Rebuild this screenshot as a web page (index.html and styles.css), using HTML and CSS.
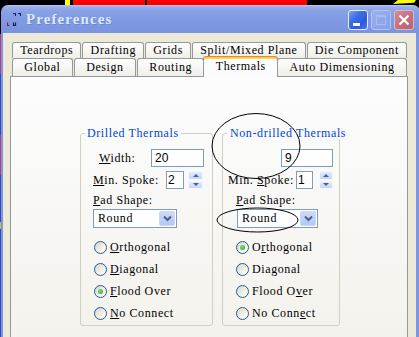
FILE: index.html
```html
<!DOCTYPE html>
<html>
<head>
<meta charset="utf-8">
<link rel="stylesheet" href="styles.css">
</head>
<body>
<div class="desktop">
  <span class="seg seg-y1"></span><span class="seg seg-r1"></span><span class="seg seg-r2"></span><span class="seg seg-y2"></span>
</div>
<div class="window">
  <div class="titlebar">
    <svg class="appicon" width="14" height="14" viewBox="0 0 14 14">
      <path d="M6 1.5H8.5V4" fill="none" stroke="#1e1e5c" stroke-width="1.2"/>
      <path d="M11 1.5H13.5V4" fill="none" stroke="#1e1e5c" stroke-width="1.2"/>
      <path d="M0.5 10.5V13.5H2.5" fill="none" stroke="#8c1c3c" stroke-width="1.2"/>
      <path d="M6.5 10.5V13.5H8.5V10.5" fill="none" stroke="#1e1e5c" stroke-width="1.2"/>
    </svg>
    <span class="title">Preferences</span>
    <div class="tbtns">
      <span class="tbtn min"><i></i></span>
      <span class="tbtn max"><i></i></span>
      <span class="tbtn close"><svg width="12" height="12" viewBox="0 0 12 12"><path d="M1.5 1.5L10.5 10.5M10.5 1.5L1.5 10.5" stroke="#fff" stroke-width="2.2"/></svg></span>
    </div>
  </div>
  <div class="client">
    <div class="tabs">
      <div class="tabrow back">
        <span class="tab">Teardrops</span>
        <span class="tab">Drafting</span>
        <span class="tab">Grids</span>
        <span class="tab">Split/Mixed Plane</span>
        <span class="tab">Die Component</span>
      </div>
      <div class="tabrow front">
        <span class="tab">Global</span>
        <span class="tab">Design</span>
        <span class="tab">Routing</span>
        <span class="tab sel">Thermals</span>
        <span class="tab">Auto Dimensioning</span>
      </div>
    </div>
    <div class="panel">
      <fieldset class="group drilled">
        <legend>Drilled Thermals</legend>
        <div class="row r1"><span><u>W</u>idth:</span><span class="field wide">20</span></div>
        <div class="row r2"><span><u>M</u>in. Spoke:</span><span class="field num">2</span><span class="spin"><i class="up"></i><i class="dn"></i></span></div>
        <div class="row r3"><span><u>P</u>ad Shape:</span></div>
        <div class="row r4"><div class="select"><span class="val">Round</span><span class="dd"><svg width="9" height="7" viewBox="0 0 9 7"><path d="M1 1.5L4.5 5L8 1.5" fill="none" stroke="#4d6185" stroke-width="2"/></svg></span></div></div>
        <div class="radios">
          <div class="rrow"><span class="radio"></span><span><u>O</u>rthogonal</span></div>
          <div class="rrow"><span class="radio"></span><span><u>D</u>iagonal</span></div>
          <div class="rrow"><span class="radio on"></span><span><u>F</u>lood Over</span></div>
          <div class="rrow"><span class="radio"></span><span><u>N</u>o Connect</span></div>
        </div>
      </fieldset>
      <fieldset class="group nondrilled">
        <legend>Non-drilled Thermals</legend>
        <div class="row r1"><span class="field wide">9</span></div>
        <div class="row r2"><span>Min. <u>S</u>poke:</span><span class="field num">1</span><span class="spin"><i class="up"></i><i class="dn"></i></span></div>
        <div class="row r3"><span><u>P</u>ad Shape:</span></div>
        <div class="row r4"><div class="select"><span class="val">Round</span><span class="dd"><svg width="9" height="7" viewBox="0 0 9 7"><path d="M1 1.5L4.5 5L8 1.5" fill="none" stroke="#4d6185" stroke-width="2"/></svg></span></div></div>
        <div class="radios">
          <div class="rrow"><span class="radio on"></span><span>O<u>r</u>thogonal</span></div>
          <div class="rrow"><span class="radio"></span><span>Diagonal</span></div>
          <div class="rrow"><span class="radio"></span><span>Flood O<u>v</u>er</span></div>
          <div class="rrow"><span class="radio"></span><span>No Conn<u>e</u>ct</span></div>
        </div>
      </fieldset>
    </div>
  </div>
</div>
<svg class="marks" width="419" height="337" viewBox="0 0 419 337">
  <ellipse cx="256" cy="146" rx="44" ry="32.5" fill="none" stroke="#000" stroke-width="1"/>
  <ellipse cx="257.5" cy="220" rx="40.5" ry="12" fill="none" stroke="#000" stroke-width="1"/>
</svg>
</body>
</html>
```

FILE: styles.css
```css
* { box-sizing: border-box; }
html, body { margin: 0; padding: 0; }
body {
  width: 419px;
  height: 337px;
  overflow: hidden;
  position: relative;
  background:
    linear-gradient(to bottom, #000 0 10%, #c03878 10% 22%, #3048b8 22% 40%, #c03878 40% 52%, #3048b8 52% 66%, #c8c030 66% 68%, #3048b8 68% 100%) no-repeat 0 0 / 1px 100%,
    #000;
  font-family: "Liberation Serif", "Times New Roman", serif;
  font-size: 12px;
  letter-spacing: 0.6px;
  color: #000;
}

/* desktop strip behind the window */
.desktop { display: flex; height: 5px; }
.seg { display: block; height: 5px; }
.seg-y1 { margin-left: 65px; width: 5px; background: #ffff00; }
.seg-r1 { margin-left: 3px; width: 72px; background: #ff0000; }
.seg-r2 { margin-left: 2px; width: 160px; background: #ff0000; }
.seg-y2 { margin-left: 81px; width: 28px; height: 4px; background: #ffff00; clip-path: polygon(5px 100%, 10px 0, 28px 0, 26px 70%); }

/* window */
.window {
  position: absolute;
  left: 1px;
  top: 5px;
  width: 419px;
  height: 332px;
  display: flex;
  flex-direction: column;
}
.titlebar {
  height: 28px;
  flex: none;
  display: flex;
  align-items: center;
  padding: 0 6px;
  border-radius: 7px 7px 0 0;
  background: linear-gradient(to bottom, #b8c9f3 0, #98aeec 2px, #88a2e7 6px, #7e99e1 60%, #7a95de 100%);
}
.appicon { flex: none; display: block; }
.title {
  margin-left: 5px;
  font-size: 15px;
  font-weight: bold;
  letter-spacing: 1.1px;
  color: #dfe7f9;
  text-shadow: 1px 1px 0 #6f89d4;
  padding-top: 1px;
}
.tbtns { margin-left: auto; display: flex; gap: 3px; margin-top: 2px; }
.tbtn {
  width: 20px;
  height: 20px;
  border-radius: 3px;
  display: flex;
  align-items: center;
  justify-content: center;
}
.tbtn.min {
  border: 1px solid #e8eefc;
  background: linear-gradient(135deg, #7aa2f6 0, #3d6fea 35%, #2a5bdf 70%, #4a7cf0 100%);
  align-items: flex-end;
  justify-content: flex-start;
  padding: 0 0 3px 4px;
}
.tbtn.min i { display: block; width: 7px; height: 3px; background: #fff; }
.tbtn.max {
  border: 1px solid #b2c4f2;
  background: linear-gradient(135deg, #9ab2ee, #859fe6);
}
.tbtn.max i { display: block; width: 10px; height: 10px; border: 1px solid #a9bdf0; border-top-width: 2px; }
.tbtn.close {
  border: 1px solid #e0b7c2;
  background: linear-gradient(135deg, #d28c98, #c36d7b 60%, #bb6270);
}

/* client area */
.client {
  flex: 1;
  background: #ece9d8;
  border-left: 2px solid #7b97df;
  border-right: 4px solid #7b97df;
  padding: 9px 8px 0 7px;
}

/* tabs */
.tabs { margin: 0 1px 0 2px; }
.tabrow { display: flex; gap: 1px; }
.tabrow.back { height: 16px; }
.tabrow.front { height: 18px; }
.tab {
  flex: 1 1 auto;
  display: flex;
  align-items: center;
  justify-content: center;
  white-space: nowrap;
  border: 1px solid #919b9c;
  border-bottom: 0;
  border-radius: 3px 3px 0 0;
  background: linear-gradient(#fefefe, #efeee8);
}
.back .tab { height: 16px; }
.front .tab { height: 18px; }
.tab.sel {
  height: 21px;
  margin: -2px -2px 0;
  position: relative;
  z-index: 2;
  background: #fcfcfe;
  border-top: 1px solid #e68b2c;
  box-shadow: inset 0 1px 0 #ffc73c, inset 0 2px 0 #ffd75e;
  padding-bottom: 2px;
}

/* panel */
.panel {
  height: 262px;
  border: 1px solid #919b9c;
  background: linear-gradient(#fdfdfe, #f3f2ec);
  padding: 50px 0 0 69px;
  display: flex;
  align-items: flex-start;
  gap: 9px;
}

.group {
  margin: 0;
  padding: 0;
  border: 1px solid #d0d0bf;
  border-radius: 3px;
  min-width: 0;
  height: 199px;
}
.drilled { width: 133px; }
.nondrilled { width: 118px; }
.group legend {
  margin-left: 4px;
  padding: 0 2px;
  color: #0046d5;
  line-height: 12px;
  white-space: nowrap;
}
.nondrilled legend { padding: 0 3px; }

.row { display: flex; align-items: center; white-space: nowrap; }
.r1 { margin-top: 10px; height: 18px; }
.r2 { margin-top: 4px; height: 18px; }
.r3 { margin-top: 5px; height: 12px; line-height: 12px; }
.r4 { margin-top: 3px; }

.r1 .field, .r2 .num { margin-left: auto; }

.drilled .r1 { padding: 0 8px 0 18px; }
.drilled .r2 { padding: 0 9px 0 12px; }
.drilled .r2 .spin { margin-left: 4px; }
.drilled .r3, .drilled .r4 { padding-left: 12px; }

.nondrilled .r1 { padding: 0 6px 0 0; }
.nondrilled .r2 { padding: 0 6px 0 5px; }
.nondrilled .r2 .num { width: 17px; }
.nondrilled .r2 .spin { margin-left: 6px; width: 14px; }
.nondrilled .r3 { padding-left: 13px; }
.nondrilled .r4 { padding-left: 14px; }

.field {
  display: block;
  height: 18px;
  border: 1px solid #7f9db9;
  background: #fff;
  font-family: "Liberation Sans", Arial, sans-serif;
  font-size: 12px;
  letter-spacing: 0;
  line-height: 16px;
  padding-left: 3px;
}
.drilled .wide { width: 53px; }
.nondrilled .wide { width: 52px; }
.num { width: 18px; padding-left: 1px; }

.spin { flex: none; width: 15px; height: 18px; display: flex; flex-direction: column; gap: 1px; }
.spin i {
  flex: 1;
  display: flex;
  align-items: center;
  justify-content: center;
  border: 1px solid #f4f7fe;
  border-radius: 2px;
  background: linear-gradient(#e3eafc, #c6d5f7);
}
.spin i::after {
  content: "";
  border-left: 3px solid transparent;
  border-right: 3px solid transparent;
}
.spin .up::after { border-bottom: 3px solid #4d6185; }
.spin .dn::after { border-top: 3px solid #4d6185; }

.select {
  display: flex;
  height: 19px;
  border: 1px solid #7f9db9;
  background: #fff;
}
.drilled .select { width: 84px; }
.nondrilled .select { width: 81px; }
.select .val { flex: 1; padding-left: 4px; line-height: 17px; }
.select .dd {
  width: 16px;
  margin: 1px 1px 1px 0;
  display: flex;
  align-items: center;
  justify-content: center;
  border: 1px solid #c9d8f8;
  border-radius: 2px;
  background: linear-gradient(#cbdafc, #b4c7f5);
}

.radios { margin-top: 8px; }
.rrow { height: 22px; display: flex; align-items: center; padding-left: 13px; gap: 3px; white-space: nowrap; }
.radio {
  flex: none;
  width: 13px;
  height: 13px;
  border-radius: 50%;
  border: 1px solid #2c5a88;
  background: linear-gradient(135deg, #d6d4cc, #fbfbf9 80%);
  display: flex;
  align-items: center;
  justify-content: center;
}
.radio.on::after {
  content: "";
  width: 5px;
  height: 5px;
  border-radius: 50%;
  background: radial-gradient(circle at 40% 40%, #7fe07f, #21a121);
}

.marks { position: absolute; left: 0; top: 0; pointer-events: none; z-index: 5; }
```
